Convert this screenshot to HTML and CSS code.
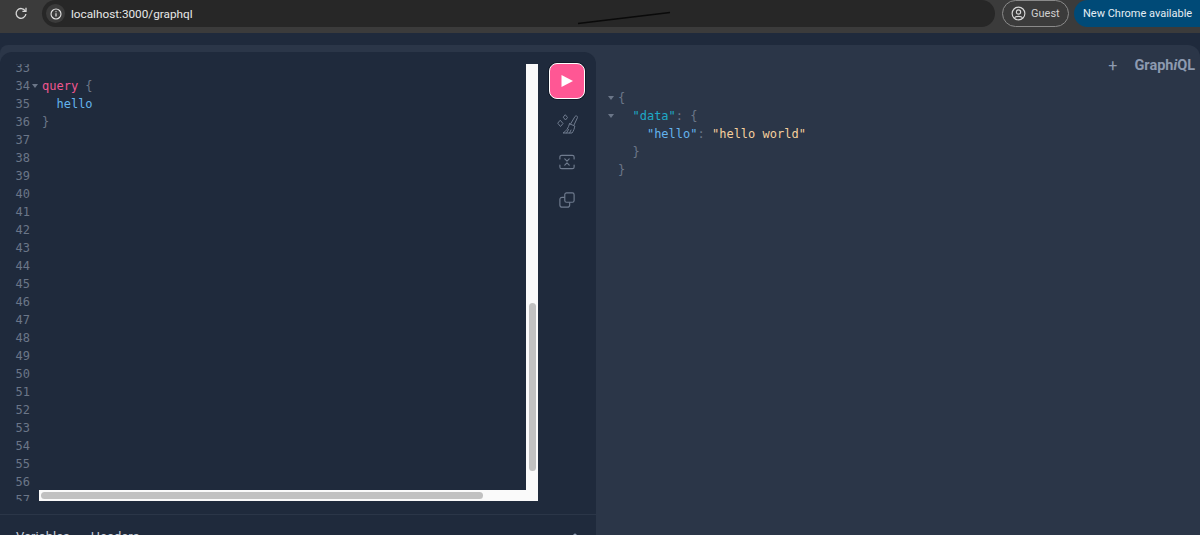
FILE: index.html
```html
<!DOCTYPE html>
<html lang="en">
<head>
<meta charset="utf-8">
<title>GraphiQL</title>
<link rel="stylesheet" href="styles.css">
</head>
<body>
<header class="chrome">
  <svg class="reload" viewBox="0 0 14 14" width="14" height="14"><path d="M11.3 5A4.9 4.9 0 1 0 11.9 8" fill="none" stroke="#d8d8d8" stroke-width="1.3"/><path d="M12 1.8V5.4H8.4" fill="none" stroke="#d8d8d8" stroke-width="1.3"/></svg>
  <div class="omnibox">
    <span class="site-chip"><svg viewBox="0 0 14 14" width="12" height="12"><circle cx="7" cy="7" r="5.8" fill="none" stroke="#e4e4e4" stroke-width="1.3"/><path d="M7 6.2V10M7 3.9V5" stroke="#e4e4e4" stroke-width="1.4"/></svg></span>
    <span class="url">localhost:3000/graphql</span>
  </div>
  <div class="guest">
    <svg viewBox="0 0 16 16" width="15" height="15"><circle cx="8" cy="8" r="6.8" fill="none" stroke="#d8d8d8" stroke-width="1.2"/><circle cx="8" cy="6.4" r="2.3" fill="none" stroke="#d8d8d8" stroke-width="1.2"/><path d="M3.8 12.6C5 10.6 11 10.6 12.2 12.6" fill="none" stroke="#d8d8d8" stroke-width="1.2"/></svg>
    <span>Guest</span>
  </div>
  <div class="update">New Chrome available</div>
  <svg class="scribble" viewBox="0 0 100 16" width="100" height="16"><path d="M4 14.5L96 3.5" stroke="#0a0a0a" stroke-width="1.6"/></svg>
</header>

<main class="page">
  <div class="workspace">
    <section class="left">
      <div class="session">
        <div class="editor">
          <div class="code-scroll">
            <div class="line"><span class="num">33</span></div>
            <div class="line"><span class="num">34</span><span class="fold open"></span><span class="kw">query</span> <span class="pn">{</span></div>
            <div class="line"><span class="num">35</span><span class="fold"></span>  <span class="fd">hello</span></div>
            <div class="line"><span class="num">36</span><span class="fold"></span><span class="pn">}</span></div>
            <div class="line"><span class="num">37</span></div>
            <div class="line"><span class="num">38</span></div>
            <div class="line"><span class="num">39</span></div>
            <div class="line"><span class="num">40</span></div>
            <div class="line"><span class="num">41</span></div>
            <div class="line"><span class="num">42</span></div>
            <div class="line"><span class="num">43</span></div>
            <div class="line"><span class="num">44</span></div>
            <div class="line"><span class="num">45</span></div>
            <div class="line"><span class="num">46</span></div>
            <div class="line"><span class="num">47</span></div>
            <div class="line"><span class="num">48</span></div>
            <div class="line"><span class="num">49</span></div>
            <div class="line"><span class="num">50</span></div>
            <div class="line"><span class="num">51</span></div>
            <div class="line"><span class="num">52</span></div>
            <div class="line"><span class="num">53</span></div>
            <div class="line"><span class="num">54</span></div>
            <div class="line"><span class="num">55</span></div>
            <div class="line"><span class="num">56</span></div>
            <div class="line"><span class="num">57</span></div>
          </div>
          <div class="track-v"><div class="thumb-v"></div></div>
          <div class="track-h"><div class="thumb-h"></div></div>
        </div>
        <nav class="toolbar">
          <button class="run" type="button" aria-label="Run"><svg viewBox="0 0 14 14" width="14" height="14"><path d="M1.5 1L13 7L1.5 13Z" fill="#fff"/></svg></button>
          <svg class="tool broom" viewBox="557 114 21 21" width="21" height="21" fill="none" stroke="#6f7b8e" stroke-width="1" stroke-linejoin="round" stroke-linecap="round"><path d="M570.500 124L575 116.500C575.700 115.400 578 116 577.500 117.500L574 125"/><path d="M569.500 123.800L574.800 126C574.500 128.500 573.500 131 572 133H563C566 131.500 568.500 128 569.500 123.800Z"/><path d="M566.500 133L568.500 129.500M569.500 133L571 130"/><path d="M565.500 115L567.500 117.500L565.500 120L563.500 117.500Z"/><path d="M560.500 120.500L563 123.500L560.500 126.500L558 123.500Z"/></svg>
          <svg class="tool merge" viewBox="0 0 18 18" width="16" height="16" fill="none" stroke="#6f7b8e" stroke-width="1.3" stroke-linecap="round" stroke-linejoin="round"><path d="M1 5.500V3.500C1 2.200 2 1.500 3 1.500H15C16 1.500 17 2.200 17 3.500V5.500"/><path d="M1 12.500V14.500C1 15.800 2 16.500 3 16.500H15C16 16.500 17 15.800 17 14.500V12.500"/><path d="M6.500 5.500L9 8L11.500 5.500M6.500 12.500L9 10L11.500 12.500"/></svg>
          <svg class="tool copy" viewBox="0 0 18 18" width="16" height="16" fill="none" stroke="#6f7b8e" stroke-width="1.3" stroke-linejoin="round"><rect x="6.500" y="1" width="10.500" height="10.500" rx="2"/><path d="M6.500 6H3.500C2 6 1 7 1 8.500V14.500C1 16 2 17 3.500 17H9.500C11 17 12 16 12 14.500V11.500"/></svg>
        </nav>
      </div>
      <div class="tabs">
        <span class="tab">Variables</span>
        <span class="tab">Headers</span>
        <svg class="chevron" viewBox="0 0 14 8" width="12" height="7"><path d="M1 6L7 1L13 6" fill="none" stroke="#8d9ab0" stroke-width="1.2"/></svg>
      </div>
    </section>
    <section class="right">
      <div class="brand">
        <span class="plus">+</span>
        <span class="logo">Graph<i>i</i>QL</span>
      </div>
      <pre class="result"><span class="fold open"></span><span class="pn">{</span>
<span class="fold open"></span>  <span class="st">"data"</span><span class="pn">: {</span>
<span class="fold"></span>    <span class="fd">"hello"</span><span class="pn">:</span> <span class="val">"hello world"</span>
<span class="fold"></span>  <span class="pn">}</span>
<span class="fold"></span><span class="pn">}</span></pre>
    </section>
  </div>
</main>
</body>
</html>
```
FILE: styles.css
```css
* { box-sizing: border-box; }
html, body { margin: 0; height: 100%; }
body {
  width: 1200px;
  height: 535px;
  overflow: hidden;
  background: #1f2a3c;
  font-family: Roboto, "Liberation Sans", Arial, sans-serif;
  display: flex;
  flex-direction: column;
}
.chrome {
  position: relative;
  height: 33px;
  flex: none;
  display: flex;
  align-items: flex-start;
  padding-left: 14px;
  background: #3b3b3b;
}
.reload { margin-top: 6px; flex: none; }
.omnibox {
  flex: none;
  width: 953px;
  height: 27px;
  margin-left: 14px;
  display: flex;
  align-items: center;
  padding-left: 4px;
  background: #272727;
  border-radius: 14px;
}
.site-chip {
  width: 19px;
  height: 19px;
  border-radius: 50%;
  background: #3b3b3b;
  display: flex;
  align-items: center;
  justify-content: center;
}
.url { margin-left: 6px; color: #e8e8e8; font-size: 11.750px; }
.guest {
  flex: none;
  width: 67px;
  height: 27px;
  margin-left: 7px;
  display: flex;
  align-items: center;
  gap: 5px;
  padding-left: 8px;
  border: 1px solid #8a8a8a;
  border-radius: 14px;
  color: #cfcfcf;
  font-size: 11px;
}
.update {
  flex: none;
  width: 126px;
  height: 27px;
  margin-left: 5px;
  padding-left: 9px;
  border-radius: 14px 0 0 14px;
  background: #004a77;
  color: #e6eef4;
  font-size: 11px;
  line-height: 28px;
  white-space: nowrap;
}
.scribble { position: absolute; left: 574px; top: 9px; }

.page { flex: 1; min-height: 0; padding-top: 12px; }
.workspace {
  height: 100%;
  display: flex;
  background: #2b3648;
  border-radius: 8px 12px 0 0;
  padding-top: 7px;
}
.left {
  width: 596px;
  flex: none;
  background: #1f2a3c;
  border-radius: 12px 12px 0 0;
  display: flex;
  flex-direction: column;
}
.session { display: flex; height: 462px; flex: none; }
.editor {
  position: relative;
  width: 538px;
  margin-top: 12px;
  height: 437px;
  overflow: hidden;
  flex: none;
}
.code-scroll { margin-top: -5px; }
.line, .result {
  font-family: "DejaVu Sans Mono", "Liberation Mono", monospace;
  font-size: 12px;
  line-height: 18px;
  white-space: pre;
}
.line { height: 18px; }
.num { display: inline-block; width: 30px; text-align: right; color: #6b7688; }
.fold { display: inline-block; width: 12px; height: 8px; position: relative; }
.fold.open::before {
  content: "";
  position: absolute;
  left: 2px;
  top: 2px;
  border-left: 3px solid transparent;
  border-right: 3px solid transparent;
  border-top: 4px solid #6b7688;
}
.kw { color: #f0568f; }
.fd { color: #63b3ed; }
.st { color: #1ea9c6; }
.val { color: #f6cf9c; }
.pn { color: #6b7688; }

.track-v {
  position: absolute;
  left: 526px;
  top: 0;
  width: 12px;
  height: 437px;
  background: #fafafa;
}
.thumb-v {
  position: absolute;
  left: 3px;
  top: 239px;
  width: 7px;
  height: 168px;
  border-radius: 4px;
  background: #c1c1c1;
}
.track-h {
  position: absolute;
  left: 39px;
  top: 426px;
  width: 499px;
  height: 11px;
  background: #fafafa;
}
.thumb-h {
  position: absolute;
  left: 2px;
  top: 2px;
  width: 442px;
  height: 7px;
  border-radius: 4px;
  background: #c1c1c1;
}
.toolbar {
  width: 58px;
  display: flex;
  flex-direction: column;
  align-items: center;
  padding: 11px 0 0 0;
}
.run {
  width: 36px;
  height: 36px;
  flex: none;
  padding: 0;
  border: 1px solid #fff;
  border-radius: 8px;
  background: #ff5794;
  display: flex;
  align-items: center;
  justify-content: center;
  box-shadow: 0 0 0 1px #111a28;
}
.tool { flex: none; display: block; }
.broom { margin-top: 15px; }
.merge { margin-top: 19px; }
.copy { margin-top: 22px; }
.tabs {
  position: relative;
  flex: 1;
  display: flex;
  gap: 21px;
  padding: 14px 0 0 16px;
  border-top: 1px solid #2b3648;
  color: #c4ccd8;
  font-size: 13px;
}
.tab { line-height: 16px; }
.chevron { position: absolute; left: 569px; top: 18px; }
.right { flex: 1; position: relative; min-width: 0; }
.brand {
  display: flex;
  justify-content: flex-end;
  align-items: center;
  gap: 17px;
  height: 26px;
  padding: 0 5px 0 0;
  color: #8d9ab0;
  font-weight: 700;
  font-size: 14.500px;
}
.plus { font-weight: 400; font-size: 16px; }
.logo i { font-style: italic; }
.result { margin: 11px 0 0 10px; }
```
